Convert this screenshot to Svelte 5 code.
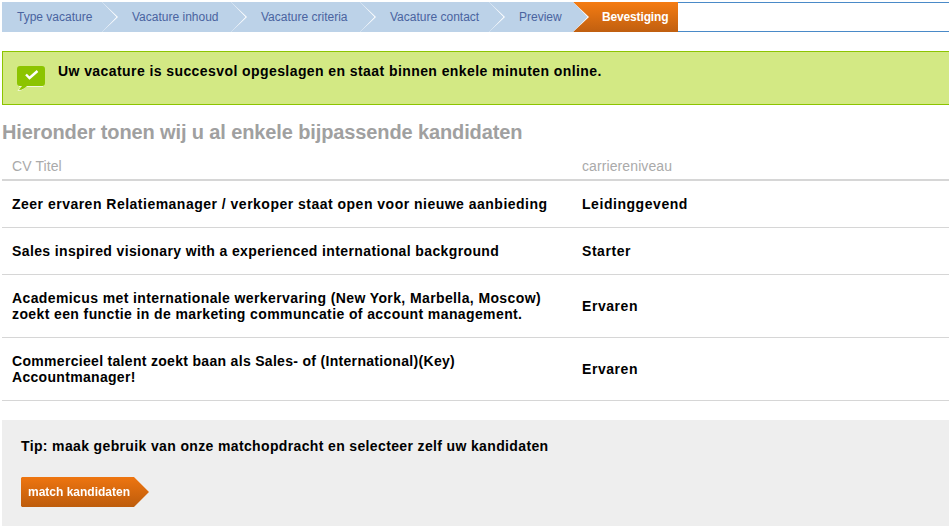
<script>
  const steps = ['Type vacature', 'Vacature inhoud', 'Vacature criteria', 'Vacature contact', 'Preview'];
  const rows = [
    { title: 'Zeer ervaren Relatiemanager / verkoper staat open voor nieuwe aanbieding', level: 'Leidinggevend', h: 47, ls: 0.49 },
    { title: 'Sales inspired visionary with a experienced international background', level: 'Starter', h: 47, ls: 0.38 },
    { title: 'Academicus met internationale werkervaring (New York, Marbella, Moscow) zoekt een functie in de marketing communcatie of account management.', level: 'Ervaren', h: 63, ls: 0.39 },
    { title: 'Commercieel talent zoekt baan als Sales- of (International)(Key) Accountmanager!', level: 'Ervaren', h: 63, ls: 0.31 }
  ];
</script>

<div class="page">
  <nav class="crumbs">
    {#each steps as s, i}
      <span class="step" class:s0={i === 0} style="z-index:{9 - i}">{s}</span>
    {/each}
    <span class="current">Bevestiging</span>
    <span class="rest"></span>
  </nav>

  <div class="notice">
    <svg class="bubble" width="28" height="25" viewBox="0 0 28 25">
      <path d="M2 20.5h3L1 24.5c2.500 0 5-1 8-4h17" fill="none" stroke="#f2f8d8" stroke-width="1"/>
      <path d="M3 0h22a3 3 0 0 1 3 3v14a3 3 0 0 1-3 3H10c-2 2-5 4-8 4l3-4H3a3 3 0 0 1-3-3V3a3 3 0 0 1 3-3z" fill="#8cc400"/>
      <path d="M9 8.500l3.500 3.500 8-7" fill="none" stroke="#fff" stroke-width="2.400"/>
    </svg>
    <p>Uw vacature is succesvol opgeslagen en staat binnen enkele minuten online.</p>
  </div>

  <h2>Hieronder tonen wij u al enkele bijpassende kandidaten</h2>

  <div class="thead"><span class="c1">CV Titel</span><span>carriereniveau</span></div>
  {#each rows as r}
    <div class="row" style="height:{r.h}px"><span class="c1" style="letter-spacing:{r.ls}px">{r.title}</span><span class="lvl">{r.level}</span></div>
  {/each}

  <div class="tip">
    <p>Tip: maak gebruik van onze matchopdracht en selecteer zelf uw kandidaten</p>
    <div class="btnwrap"><span class="btn">match kandidaten</span></div>
  </div>
</div>

<style>
  :global(body) { margin: 0; background: #fff; }
  .page { padding: 2px 0 0 2px; font-family: "Liberation Sans", Arial, sans-serif; width: 947px; height: 525px; overflow: hidden; }
  .crumbs { display: flex; height: 30px; font-size: 12px; line-height: 30px; }
  .step { position: relative; width: 129px; box-sizing: border-box; padding-left: 30px; background: #bcd2e8; color: #4a64a0; }
  .step.s0 { width: 100px; padding-left: 15px; }
  .step:nth-child(5) { width: 84px; }
  .step::before, .step::after { content: ""; position: absolute; top: 0; left: 100%; height: 30px; clip-path: polygon(0 0, 100% 50%, 0 100%); }
  .step::before { width: 16px; background: #fff; }
  .step::after { width: 14.500px; background: #bcd2e8; }
  .current { width: 105px; box-sizing: border-box; padding-left: 29px; background: linear-gradient(#f57c12, #c05f10); color: #fff; font-weight: bold; letter-spacing: -.15px; }
  .rest { flex: 1; border-top: 1px solid #4a8ac8; border-bottom: 1px solid #4a8ac8; }
  .notice { display: flex; gap: 13px; height: 52px; margin-top: 19px; padding-left: 14px; background: #d3e984; border: solid #8cc400; border-width: 1px 0 1px 1px; }
  .bubble { margin-top: 14px; flex: none; }
  .notice p { margin: 10px 0 0; font-size: 14px; font-weight: bold; letter-spacing: .42px; line-height: 18px; color: #000; }
  h2 { margin: 15px 0 0; font-size: 20px; line-height: 24px; font-weight: bold; color: #a0a0a0; letter-spacing: -.12px; }
  .thead { display: flex; align-items: center; height: 37px; box-sizing: border-box; padding: 8px 0 0 10px; border-bottom: 2px solid #d6d6d6; font-size: 14px; color: #aaa; letter-spacing: .1px; }
  .c1 { width: 570px; flex: none; }
  .row { display: flex; align-items: center; box-sizing: border-box; border-bottom: 1px solid #d6d6d6; padding-left: 10px; font-size: 14px; font-weight: bold; line-height: 16px; color: #000; }
  .row .c1 { box-sizing: border-box; padding-right: 30px; }
  .lvl { letter-spacing: .55px; }
  .tip { margin-top: 19px; height: 106px; box-sizing: border-box; padding: 17px 19px; background: #eee; }
  .tip p { margin: 0 0 22px; font-size: 14px; font-weight: bold; letter-spacing: .36px; line-height: 18px; color: #000; }
  .btnwrap { width: 128px; filter: drop-shadow(0 0 .6px #fff); }
  .btn { display: block; height: 30px; line-height: 30px; padding-left: 7px; box-sizing: border-box; font-size: 12px; font-weight: bold; color: #fff; background: linear-gradient(#ee7510, #bd5c0c); clip-path: polygon(1px 0, 113px 0, 100% 50%, 113px 100%, 1px 100%, 0 29px, 0 1px); }
</style>
